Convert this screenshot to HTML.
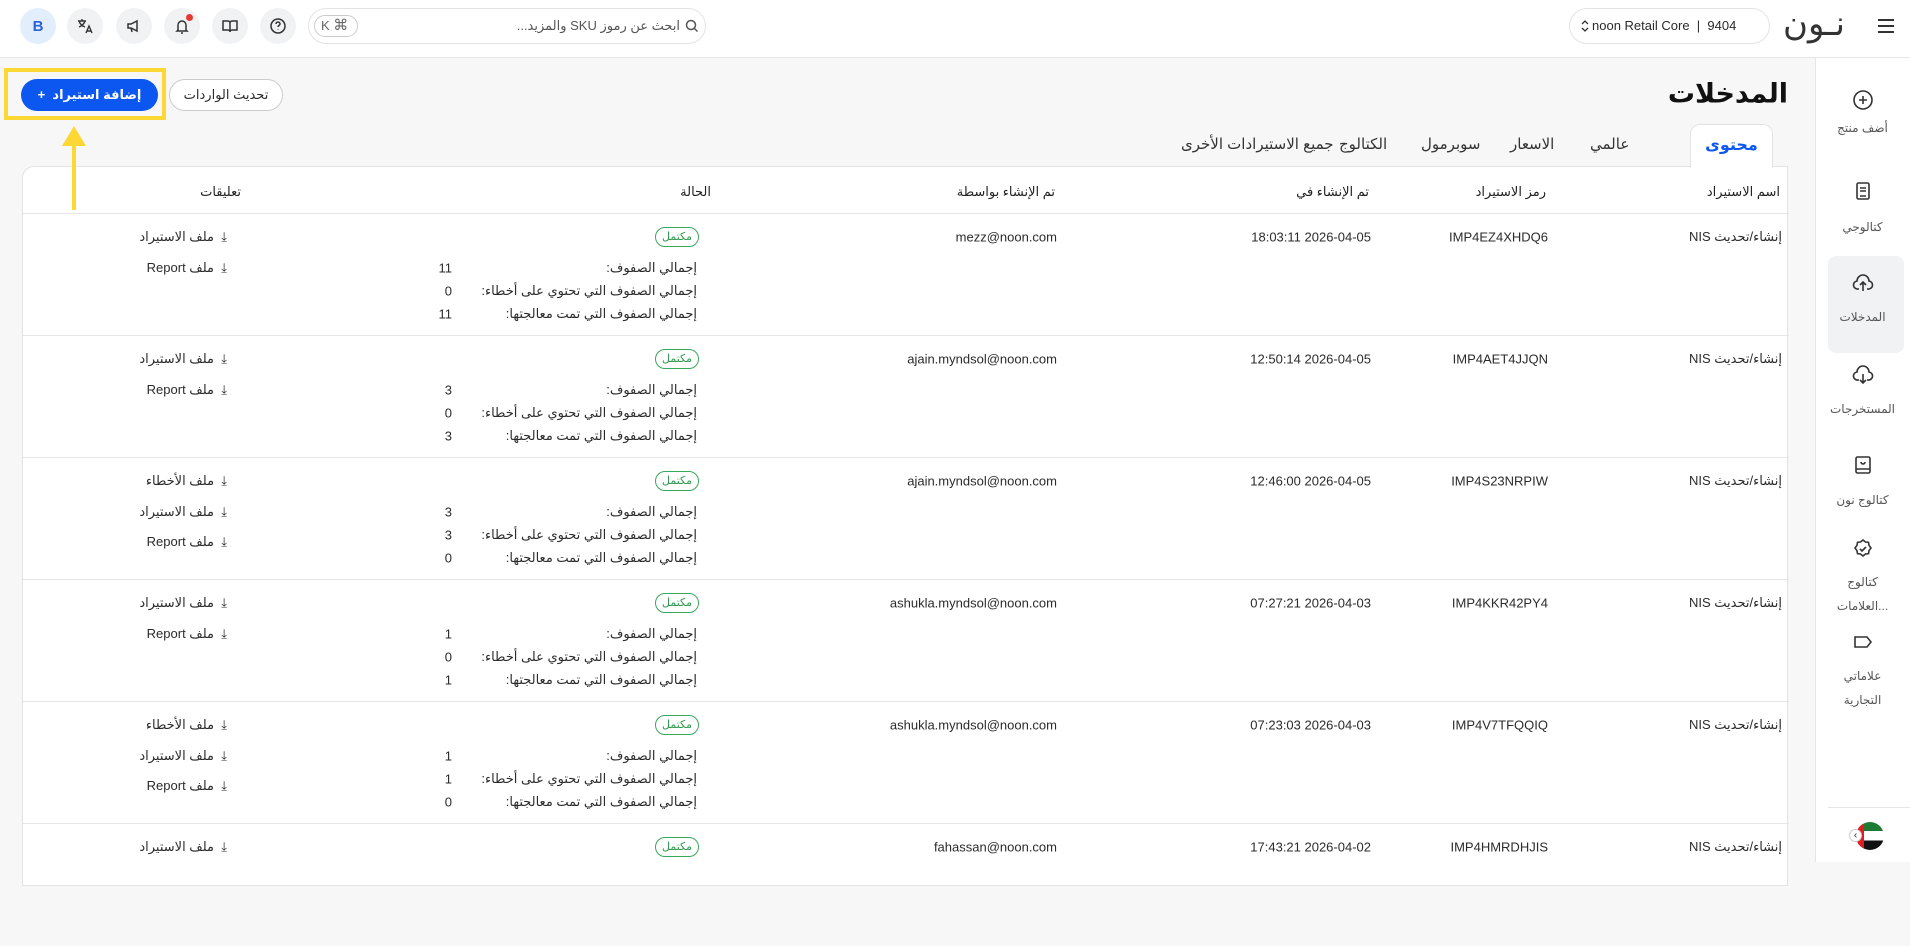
<!DOCTYPE html>
<html style="background:#f7f7f8"><head><meta charset="utf-8">
<style>
*{box-sizing:border-box;margin:0;padding:0}
body{width:1910px;height:862px;overflow:hidden;background:#f7f7f8;font-family:"Liberation Sans","DejaVu Sans",sans-serif;color:#2b2b2b;font-size:13px;position:relative}
.a{position:absolute}
.top{left:0;top:0;width:1910px;height:58px;background:#fff;border-bottom:1px solid #e6e6e6}
.ic{width:36px;height:36px;border-radius:50%;background:#f1f2f4;top:8px;display:flex;align-items:center;justify-content:center}
.side{left:1815px;top:58px;width:95px;height:804px;background:#fff;border-left:1px solid #e6e6e6}
.si{width:95px;text-align:center;font-size:12px;color:#555;line-height:24px}
.card{left:22px;top:166px;width:1766px;height:720px;background:#fff;border:1px solid #e3e3e3;border-radius:12px 0 0 0}
.row{left:0;width:1766px;height:122px;border-bottom:1px solid #e6e6e6}
.c{direction:rtl;white-space:nowrap;transform:translateY(-50%)}
.l{direction:ltr}
.hd{font-size:13px;color:#222}
.badge{border:1px solid #38a85a;color:#2e9a4e;border-radius:10px;font-size:11px;padding:1px 6px;line-height:16px}
.tab{top:124px;height:42px;line-height:42px;font-size:15px;color:#333;direction:rtl;white-space:nowrap}
</style></head><body>
<div class="a top"></div>
<div class="a ic" style="left:20px;background:#e3eefc;color:#2a62d8;font-weight:bold;font-size:15px">B</div>
<div class="a ic" style="left:67px"><svg width="18" height="18" viewBox="0 0 18 18" fill="none" stroke="#333" stroke-width="1.4"><path d="M2 4h8M6 2v2M3 4c1 3 3 5 6 6M9 4c-1 3-3 5-6 6M10 16l3-7 3 7M11 14h4"/></svg></div>
<div class="a ic" style="left:116px"><svg width="18" height="18" viewBox="0 0 18 18" fill="none" stroke="#333" stroke-width="1.5"><path d="M3 7h3l6-3v10l-6-3H3zM6 11l1 4"/></svg></div>
<div class="a ic" style="left:164px"><svg width="18" height="18" viewBox="0 0 18 18" fill="none" stroke="#333" stroke-width="1.5"><path d="M5 13V8a4 4 0 018 0v5l1 1H4zM8 16h2"/></svg><div class="a" style="left:22px;top:6px;width:7px;height:7px;border-radius:50%;background:#e53935"></div></div>
<div class="a ic" style="left:212px"><svg width="18" height="18" viewBox="0 0 18 18" fill="none" stroke="#333" stroke-width="1.5"><path d="M2 4h5a2 2 0 012 2v9a2 2 0 00-2-2H2zM16 4h-5a2 2 0 00-2 2v9a2 2 0 012-2h5z"/></svg></div>
<div class="a ic" style="left:260px"><svg width="18" height="18" viewBox="0 0 18 18" fill="none" stroke="#333" stroke-width="1.5"><circle cx="9" cy="9" r="7"/><path d="M7 7a2 2 0 114 0c0 1.5-2 1.5-2 3M9 12.5v.5"/></svg></div>
<div class="a" style="left:308px;top:8px;width:398px;height:36px;border:1px solid #e3e3e3;border-radius:18px;background:#fff"></div>
<div class="a" style="left:314px;top:15px;width:44px;height:22px;border:1px solid #ccc;border-radius:11px;font-size:13px;color:#666;line-height:20px;padding-left:6px">K <span style="font-size:15px">⌘</span></div>
<div class="a c" style="right:1230px;top:26px;font-size:13px;color:#555">ابحث عن رموز SKU والمزيد...</div>
<svg class="a" style="left:684px;top:18px" width="16" height="16" viewBox="0 0 16 16" fill="none" stroke="#555" stroke-width="1.5"><circle cx="7" cy="7" r="4.5"/><path d="M10.5 10.5l3 3"/></svg>
<div class="a" style="left:1569px;top:8px;width:201px;height:36px;border:1px solid #e3e3e3;border-radius:18px;background:#fff;font-size:13px;line-height:34px;padding-left:22px;white-space:nowrap">noon Retail Core &nbsp;|&nbsp; 9404</div>
<svg class="a" style="left:1580px;top:18px" width="10" height="16" viewBox="0 0 10 16" fill="none" stroke="#333" stroke-width="1.3"><path d="M2 6l3-3 3 3M2 10l3 3 3-3"/></svg>
<div class="a" style="left:1783px;top:4px;font-size:34px;color:#333;direction:rtl">نـون</div>
<div class="a" style="left:1878px;top:19px;width:16px;height:2px;background:#333;box-shadow:0 6px 0 #333,0 12px 0 #333"></div>
<div class="a side"></div>
<div class="a" style="left:1828px;top:256px;width:76px;height:97px;border-radius:8px;background:#f1f2f4"></div>
<svg class="a" style="left:1852px;top:89px" width="22" height="22" viewBox="0 0 22 22" fill="none" stroke="#333" stroke-width="1.6"><circle cx="11" cy="11" r="9"/><path d="M11 7v8M7 11h8"/></svg>
<div class="a si" style="left:1815px;top:116px">أضف منتج</div>
<svg class="a" style="left:1852px;top:180px" width="22" height="22" viewBox="0 0 22 22" fill="none" stroke="#333" stroke-width="1.6"><rect x="5" y="3" width="12" height="16" rx="1.5"/><path d="M8 8h6M8 11h6M8 16h6"/></svg>
<div class="a si" style="left:1815px;top:215px">كتالوجي</div>
<svg class="a" style="left:1852px;top:272px" width="22" height="22" viewBox="0 0 22 22" fill="none" stroke="#333" stroke-width="1.6"><path d="M7 17H6a4 4 0 01-1-8 6 6 0 0112 0 4 4 0 01-1 8h-1M11 19v-8M8 13l3-3 3 3"/></svg>
<div class="a si" style="left:1815px;top:305px">المدخلات</div>
<svg class="a" style="left:1852px;top:364px" width="22" height="22" viewBox="0 0 22 22" fill="none" stroke="#333" stroke-width="1.6"><path d="M7 16H6a4 4 0 01-1-8 6 6 0 0112 0 4 4 0 01-1 8h-1M11 10v9M8 16l3 3 3-3"/></svg>
<div class="a si" style="left:1815px;top:397px">المستخرجات</div>
<svg class="a" style="left:1852px;top:454px" width="22" height="22" viewBox="0 0 22 22" fill="none" stroke="#333" stroke-width="1.6"><rect x="4" y="3" width="14" height="16" rx="1.5"/><path d="M4 15h14M9 8a2 2 0 004 0"/></svg>
<div class="a si" style="left:1815px;top:488px">كتالوج نون</div>
<svg class="a" style="left:1852px;top:538px" width="22" height="22" viewBox="0 0 22 22" fill="none" stroke="#333" stroke-width="1.6"><path d="M11 2l2.5 2 3 .3.5 3 2 2.7-2 2.7-.5 3-3 .3-2.5 2-2.5-2-3-.3-.5-3-2-2.7 2-2.7.5-3 3-.3z"/><path d="M8 11l2 2 4-4"/></svg>
<div class="a si" style="left:1815px;top:570px">كتالوج<br>العلامات...</div>
<svg class="a" style="left:1852px;top:631px" width="22" height="22" viewBox="0 0 22 22" fill="none" stroke="#333" stroke-width="1.6"><path d="M3 6h12l4 5-4 5H3z"/></svg>
<div class="a si" style="left:1815px;top:664px">علاماتي<br>التجارية</div>
<div class="a" style="left:1828px;top:807px;width:82px;height:1px;background:#e6e6e6"></div>
<div class="a" style="left:1856px;top:822px;width:28px;height:28px;border-radius:50%;overflow:hidden;background:linear-gradient(#1e7b34 0 33%,#fff 33% 66%,#111 66%)"><div style="width:8px;height:28px;background:#e21c21"></div></div>
<div class="a" style="left:1849px;top:829px;width:13px;height:13px;border-radius:50%;background:#fff;border:1px solid #ccc;font-size:10px;line-height:11px;text-align:center">‹</div>
<div class="a c" style="right:122px;top:94px;font-size:27px;font-weight:bold;color:#111">المدخلات</div>
<div class="a" style="left:21px;top:79px;width:137px;height:32px;border-radius:16px;background:#0b57f0;color:#fff;font-size:13px;line-height:32px;text-align:center;direction:rtl;font-weight:bold">إضافة استيراد &nbsp;+</div>
<div class="a" style="left:169px;top:79px;width:114px;height:32px;border-radius:16px;background:#fff;border:1px solid #ccc;font-size:13px;line-height:30px;text-align:center;direction:rtl">تحديث الواردات</div>
<div class="a" style="left:1690px;top:124px;width:83px;height:44px;background:#fff;border:1px solid #e3e3e3;border-bottom:none;border-radius:10px 10px 0 0;z-index:2;text-align:center;line-height:42px;color:#0b57f0;font-weight:bold;font-size:16px">محتوى</div>
<div class="a tab" style="left:1590px">عالمي</div>
<div class="a tab" style="left:1510px">الاسعار</div>
<div class="a tab" style="left:1421px">سوبرمول</div>
<div class="a tab" style="left:1339px">الكتالوج</div>
<div class="a tab" style="left:1181px">جميع الاستيرادات الأخرى</div>
<div class="a card">
 <div class="a" style="left:0;top:0;width:1766px;height:47px;border-bottom:1px solid #e6e6e6"></div>
 <div class="a c hd" style="right:7px;top:25px">اسم الاستيراد</div>
 <div class="a c hd" style="right:241px;top:25px">رمز الاستيراد</div>
 <div class="a c hd" style="right:418px;top:25px">تم الإنشاء في</div>
 <div class="a c hd" style="right:732px;top:25px">تم الإنشاء بواسطة</div>
 <div class="a c hd" style="right:1076px;top:25px">الحالة</div>
 <div class="a c hd" style="right:1546px;top:25px">تعليقات</div>

 <div class="a row" style="top:47px">
  <div class="a c" style="right:7px;top:23px">إنشاء/تحديث NIS</div>
  <div class="a c l" style="right:241px;top:23px">IMP4EZ4XHDQ6</div>
  <div class="a c l" style="right:418px;top:23px">18:03:11 2026-04-05</div>
  <div class="a c l" style="right:732px;top:23px">mezz@noon.com</div>
  <div class="a c badge" style="right:1090px;top:23px">مكتمل</div>
  <div class="a c" style="right:1092px;top:54px">إجمالي الصفوف:</div>
  <div class="a c" style="right:1092px;top:77px">إجمالي الصفوف التي تحتوي على أخطاء:</div>
  <div class="a c" style="right:1092px;top:100px">إجمالي الصفوف التي تمت معالجتها:</div>
  <div class="a c" style="right:1337px;top:54px">11</div><div class="a c" style="right:1337px;top:77px">0</div><div class="a c" style="right:1337px;top:100px">11</div>
  <div class="a c" style="right:1562px;top:23px">⤓ &nbsp;ملف الاستيراد</div>
  <div class="a c" style="right:1562px;top:54px">⤓ &nbsp;ملف Report</div>
 </div>
 <div class="a row" style="top:169px">
  <div class="a c" style="right:7px;top:23px">إنشاء/تحديث NIS</div>
  <div class="a c l" style="right:241px;top:23px">IMP4AET4JJQN</div>
  <div class="a c l" style="right:418px;top:23px">12:50:14 2026-04-05</div>
  <div class="a c l" style="right:732px;top:23px">ajain.myndsol@noon.com</div>
  <div class="a c badge" style="right:1090px;top:23px">مكتمل</div>
  <div class="a c" style="right:1092px;top:54px">إجمالي الصفوف:</div>
  <div class="a c" style="right:1092px;top:77px">إجمالي الصفوف التي تحتوي على أخطاء:</div>
  <div class="a c" style="right:1092px;top:100px">إجمالي الصفوف التي تمت معالجتها:</div>
  <div class="a c" style="right:1337px;top:54px">3</div><div class="a c" style="right:1337px;top:77px">0</div><div class="a c" style="right:1337px;top:100px">3</div>
  <div class="a c" style="right:1562px;top:23px">⤓ &nbsp;ملف الاستيراد</div>
  <div class="a c" style="right:1562px;top:54px">⤓ &nbsp;ملف Report</div>
 </div>
 <div class="a row" style="top:291px">
  <div class="a c" style="right:7px;top:23px">إنشاء/تحديث NIS</div>
  <div class="a c l" style="right:241px;top:23px">IMP4S23NRPIW</div>
  <div class="a c l" style="right:418px;top:23px">12:46:00 2026-04-05</div>
  <div class="a c l" style="right:732px;top:23px">ajain.myndsol@noon.com</div>
  <div class="a c badge" style="right:1090px;top:23px">مكتمل</div>
  <div class="a c" style="right:1092px;top:54px">إجمالي الصفوف:</div>
  <div class="a c" style="right:1092px;top:77px">إجمالي الصفوف التي تحتوي على أخطاء:</div>
  <div class="a c" style="right:1092px;top:100px">إجمالي الصفوف التي تمت معالجتها:</div>
  <div class="a c" style="right:1337px;top:54px">3</div><div class="a c" style="right:1337px;top:77px">3</div><div class="a c" style="right:1337px;top:100px">0</div>
  <div class="a c" style="right:1562px;top:23px">⤓ &nbsp;ملف الأخطاء</div>
  <div class="a c" style="right:1562px;top:54px">⤓ &nbsp;ملف الاستيراد</div>
  <div class="a c" style="right:1562px;top:84px">⤓ &nbsp;ملف Report</div>
 </div>
 <div class="a row" style="top:413px">
  <div class="a c" style="right:7px;top:23px">إنشاء/تحديث NIS</div>
  <div class="a c l" style="right:241px;top:23px">IMP4KKR42PY4</div>
  <div class="a c l" style="right:418px;top:23px">07:27:21 2026-04-03</div>
  <div class="a c l" style="right:732px;top:23px">ashukla.myndsol@noon.com</div>
  <div class="a c badge" style="right:1090px;top:23px">مكتمل</div>
  <div class="a c" style="right:1092px;top:54px">إجمالي الصفوف:</div>
  <div class="a c" style="right:1092px;top:77px">إجمالي الصفوف التي تحتوي على أخطاء:</div>
  <div class="a c" style="right:1092px;top:100px">إجمالي الصفوف التي تمت معالجتها:</div>
  <div class="a c" style="right:1337px;top:54px">1</div><div class="a c" style="right:1337px;top:77px">0</div><div class="a c" style="right:1337px;top:100px">1</div>
  <div class="a c" style="right:1562px;top:23px">⤓ &nbsp;ملف الاستيراد</div>
  <div class="a c" style="right:1562px;top:54px">⤓ &nbsp;ملف Report</div>
 </div>
 <div class="a row" style="top:535px">
  <div class="a c" style="right:7px;top:23px">إنشاء/تحديث NIS</div>
  <div class="a c l" style="right:241px;top:23px">IMP4V7TFQQIQ</div>
  <div class="a c l" style="right:418px;top:23px">07:23:03 2026-04-03</div>
  <div class="a c l" style="right:732px;top:23px">ashukla.myndsol@noon.com</div>
  <div class="a c badge" style="right:1090px;top:23px">مكتمل</div>
  <div class="a c" style="right:1092px;top:54px">إجمالي الصفوف:</div>
  <div class="a c" style="right:1092px;top:77px">إجمالي الصفوف التي تحتوي على أخطاء:</div>
  <div class="a c" style="right:1092px;top:100px">إجمالي الصفوف التي تمت معالجتها:</div>
  <div class="a c" style="right:1337px;top:54px">1</div><div class="a c" style="right:1337px;top:77px">1</div><div class="a c" style="right:1337px;top:100px">0</div>
  <div class="a c" style="right:1562px;top:23px">⤓ &nbsp;ملف الأخطاء</div>
  <div class="a c" style="right:1562px;top:54px">⤓ &nbsp;ملف الاستيراد</div>
  <div class="a c" style="right:1562px;top:84px">⤓ &nbsp;ملف Report</div>
 </div>
 <div class="a row" style="top:657px;border-bottom:none">
  <div class="a c" style="right:7px;top:23px">إنشاء/تحديث NIS</div>
  <div class="a c l" style="right:241px;top:23px">IMP4HMRDHJIS</div>
  <div class="a c l" style="right:418px;top:23px">17:43:21 2026-04-02</div>
  <div class="a c l" style="right:732px;top:23px">fahassan@noon.com</div>
  <div class="a c badge" style="right:1090px;top:23px">مكتمل</div>
  <div class="a c" style="right:1562px;top:23px">⤓ &nbsp;ملف الاستيراد</div>
 </div>
</div>
<!-- highlight overlay -->
<div class="a" style="left:4px;top:68px;width:162px;height:52px;border:4px solid #fdd835;z-index:5"></div>
<div class="a" style="left:72px;top:138px;width:4px;height:72px;background:#fdd835;z-index:5"></div>
<div class="a" style="left:62px;top:126px;width:0;height:0;border-left:12px solid transparent;border-right:12px solid transparent;border-bottom:20px solid #fdd835;z-index:5"></div>
</body></html>
